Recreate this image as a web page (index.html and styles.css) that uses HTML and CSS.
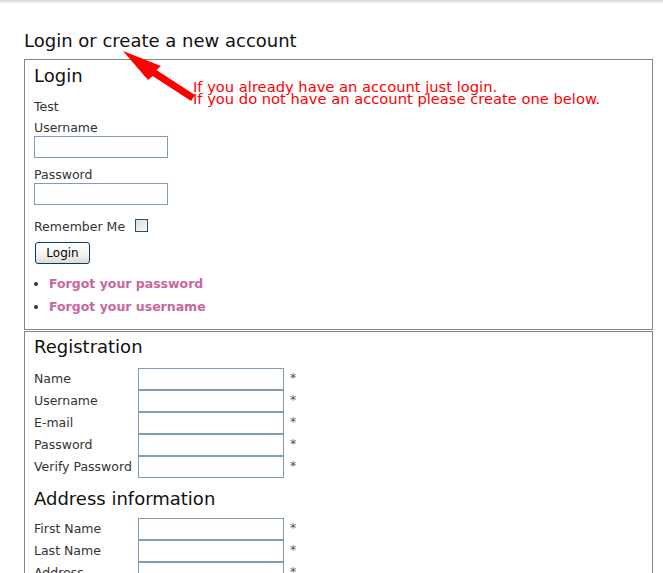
FILE: index.html
```html
<!DOCTYPE html>
<html>
<head>
<meta charset="utf-8">
<title>Login or create a new account</title>
<link rel="stylesheet" href="styles.css">
</head>
<body>
<div class="topbar"></div>
<div class="page">
  <h1 class="title">Login or create a new account</h1>

  <div class="box login-box">
    <h2 class="box-title">Login</h2>
    <p class="intro">Test</p>
    <label class="field-label" for="u">Username</label>
    <input class="text-input" id="u" type="text">
    <label class="field-label pw-label" for="p">Password</label>
    <input class="text-input" id="p" type="password">
    <div class="remember">
      <span>Remember Me</span>
      <input class="check" type="checkbox">
    </div>
    <button class="btn" type="button">Login</button>
    <ul class="links">
      <li><a href="#">Forgot your password</a></li>
      <li><a href="#">Forgot your username</a></li>
    </ul>
  </div>

  <div class="box reg-box">
    <h2 class="box-title">Registration</h2>
    <table class="form-table">
      <tr><td class="lbl">Name</td><td><input class="cell-input" type="text"></td><td class="req">*</td></tr>
      <tr><td class="lbl">Username</td><td><input class="cell-input" type="text"></td><td class="req">*</td></tr>
      <tr><td class="lbl">E-mail</td><td><input class="cell-input" type="text"></td><td class="req">*</td></tr>
      <tr><td class="lbl">Password</td><td><input class="cell-input" type="password"></td><td class="req">*</td></tr>
      <tr><td class="lbl">Verify Password</td><td><input class="cell-input" type="password"></td><td class="req">*</td></tr>
    </table>
    <h2 class="box-title sub">Address information</h2>
    <table class="form-table">
      <tr><td class="lbl">First Name</td><td><input class="cell-input" type="text"></td><td class="req">*</td></tr>
      <tr><td class="lbl">Last Name</td><td><input class="cell-input" type="text"></td><td class="req">*</td></tr>
      <tr><td class="lbl">Address</td><td><input class="cell-input" type="text"></td><td class="req">*</td></tr>
      <tr><td class="lbl">City</td><td><input class="cell-input" type="text"></td><td class="req">*</td></tr>
      <tr><td class="lbl">Zip</td><td><input class="cell-input" type="text"></td><td class="req">*</td></tr>
    </table>
  </div>
</div>

<svg class="arrow" width="220" height="110" viewBox="0 0 220 110" aria-hidden="true">
  <polygon fill="#f00" points="123,51 161,66 156.4,70.1 194.9,95.1 191.1,100.9 152.6,75.9 148,80"/>
</svg>
<div class="note">If you already have an account just login.<br>If you do not have an account please create one below.</div>
</body>
</html>
```

FILE: styles.css
```css
html, body {
  margin: 0;
  padding: 0;
  background: #fff;
}
body {
  font-family: "DejaVu Sans", Verdana, sans-serif;
  font-size: 12.5px;
  color: #333;
  position: relative;
}
.topbar {
  height: 4px;
  background: linear-gradient(#d4d4d4, #fff);
}
.page {
  padding: 26px 10px 0 24px;
}
.title {
  margin: 0 0 7px;
  font-size: 18px;
  line-height: 22px;
  font-weight: normal;
  color: #111;
}
.box {
  border: 1px solid #85857a;
}
.login-box {
  padding: 5px 9px 14px;
}
.reg-box {
  margin-top: 1px;
  padding: 4px 9px 40px;
}
.box-title {
  margin: 0;
  font-size: 18px;
  line-height: 22px;
  font-weight: normal;
  color: #111;
}
.intro {
  margin: 12px 0 5px;
  line-height: 16px;
}
.field-label {
  display: block;
  line-height: 16px;
}
.pw-label {
  margin-top: 9px;
}
.text-input {
  display: block;
  box-sizing: border-box;
  width: 134px;
  height: 22px;
  margin: 0;
  border: 1px solid #7f9db9;
  background: #fff;
  padding: 2px;
  font: inherit;
}
.remember {
  display: flex;
  align-items: flex-start;
  margin-top: 14px;
  line-height: 16px;
}
.check {
  appearance: none;
  -webkit-appearance: none;
  box-sizing: border-box;
  width: 13px;
  height: 13px;
  margin: 0 0 0 10px;
  border: 1px solid #1c5180;
  background: linear-gradient(135deg, #dcdcd5, #fbfbf9);
}
.btn {
  display: block;
  box-sizing: border-box;
  width: 55px;
  height: 22px;
  margin: 7px 0 0 1px;
  padding: 0;
  border: 1px solid #003c74;
  border-radius: 3px;
  background: linear-gradient(#fff, #f3f3ef 60%, #dedbcf);
  font-family: "DejaVu Sans", Verdana, sans-serif;
  font-size: 12px;
  color: #000;
}
.links {
  margin: 12px 0 0;
  padding: 0 0 0 15px;
  line-height: 16px;
}
.links li {
  margin-bottom: 7px;
}
.links li:last-child {
  margin-bottom: 0;
}
.links li::marker {
  color: #333;
}
.links a {
  color: #c9669f;
  font-weight: bold;
  text-decoration: none;
}
.reg-box .box-title {
  margin-bottom: 10px;
}
.reg-box .box-title.sub {
  margin-top: 10px;
  margin-bottom: 8px;
}
.form-table {
  border-collapse: collapse;
}
.form-table td {
  padding: 0;
  height: 22px;
  line-height: 22px;
  vertical-align: top;
}
.lbl {
  width: 104px;
  white-space: nowrap;
}
.cell-input {
  display: block;
  box-sizing: border-box;
  width: 146px;
  height: 22px;
  margin: 0;
  border: 1px solid #7f9db9;
  background: #fff;
  font: inherit;
}
.req {
  padding-left: 6px !important;
  line-height: 19px !important;
  color: #555;
}
.arrow {
  position: absolute;
  left: 0;
  top: 0;
  pointer-events: none;
}
.note {
  position: absolute;
  left: 193px;
  top: 81px;
  font-size: 14.7px;
  line-height: 12px;
  color: #f00;
  white-space: nowrap;
}
```
